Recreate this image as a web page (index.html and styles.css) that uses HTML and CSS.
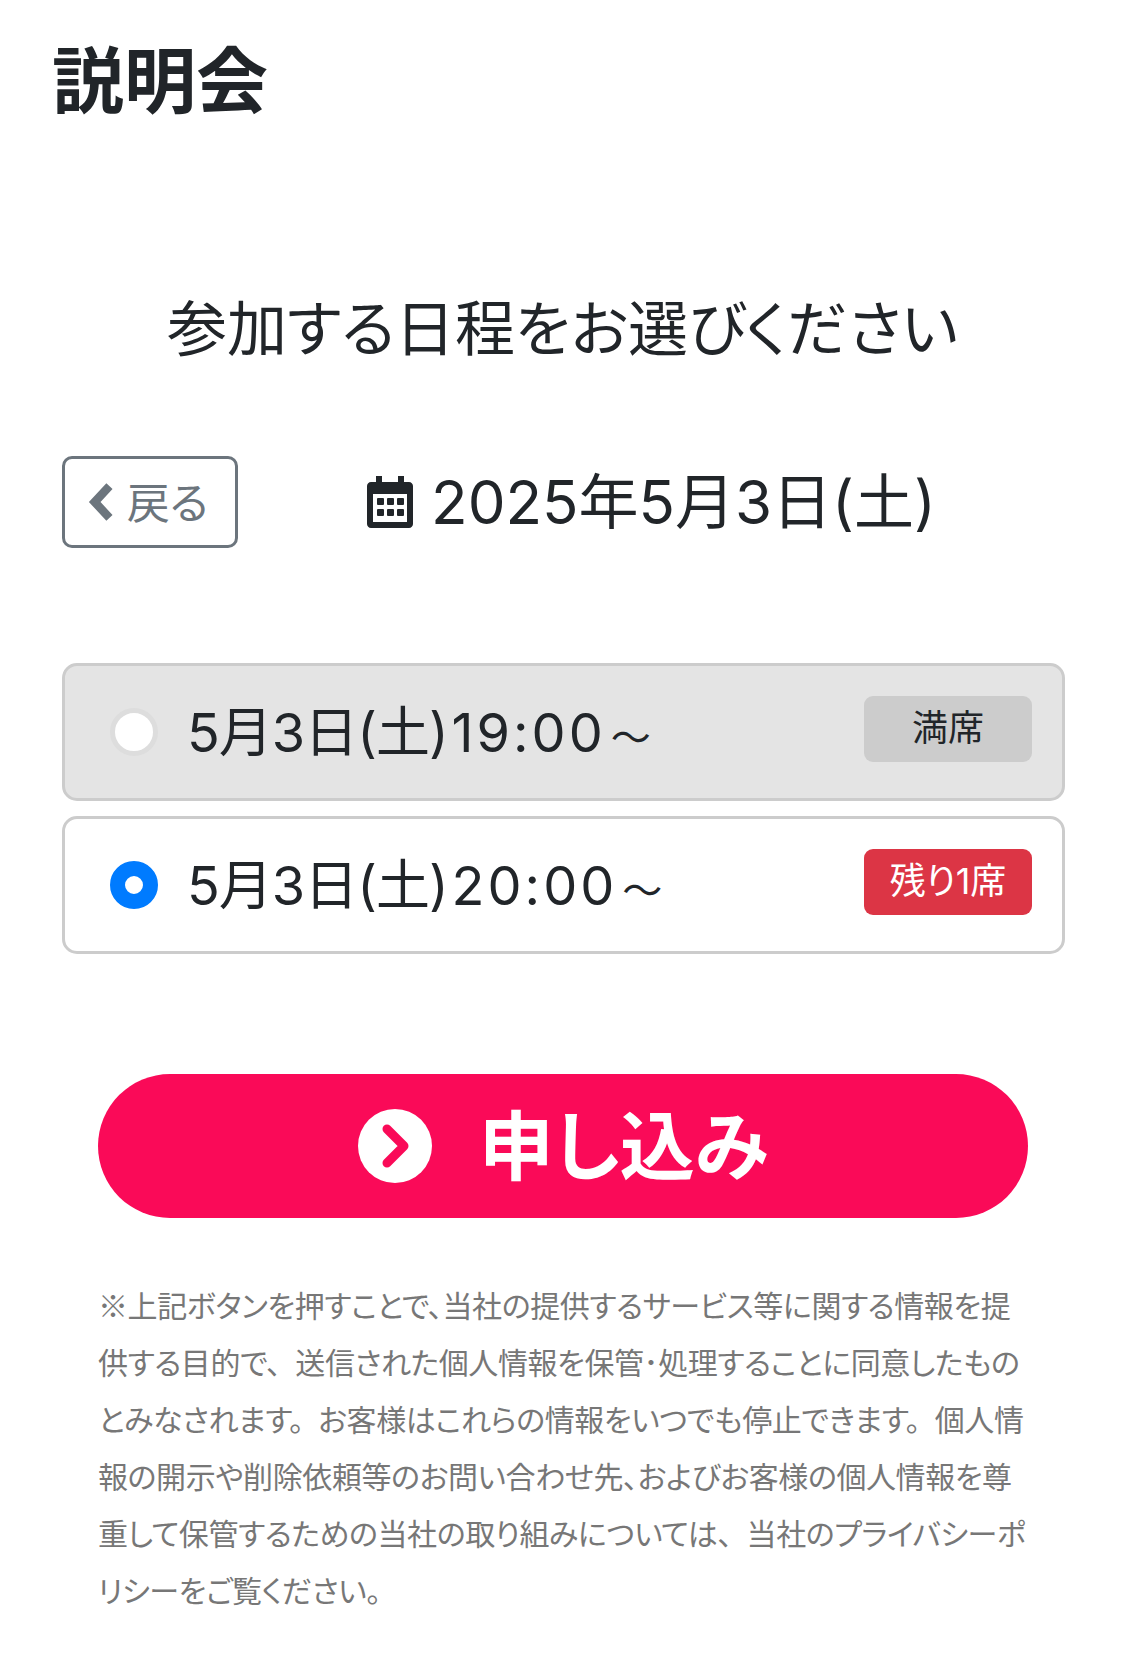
FILE: index.html
```html
<!DOCTYPE html>
<html lang="ja">
<head>
    <meta charset="UTF-8">
    <meta name="viewport" content="width=device-width, initial-scale=1.0">
    <title>説明会</title>
    <link rel="stylesheet" href="styles.css">
</head>
<body>

    <h1 class="page-title">説明会</h1>

    <h2 class="lead">参加する日程をお選びください</h2>

    <div class="date-row">
        <a class="back-btn" href="#">
            <svg class="back-icon" viewBox="0 0 24 36"><polyline points="20,3 6,18 20,33"/></svg>
            <span class="back-text">戻る</span>
        </a>
        <div class="date-label">
            <svg class="cal-icon" viewBox="0 0 46 52">
                <path d="M9 0h6v6h16V0h6v6h5c2.200 0 4 1.800 4 4v38c0 2.200-1.800 4-4 4H4c-2.200 0-4-1.800-4-4V10c0-2.200 1.800-4 4-4h5zM6 18v28h34V18z" fill-rule="evenodd"/>
                <rect x="10" y="22" width="7" height="7" rx="1"/>
                <rect x="20" y="22" width="7" height="7" rx="1"/>
                <rect x="30" y="22" width="7" height="7" rx="1"/>
                <rect x="10" y="33" width="7" height="7" rx="1"/>
                <rect x="20" y="33" width="7" height="7" rx="1"/>
                <rect x="30" y="33" width="7" height="7" rx="1"/>
            </svg>
            <span class="date-text">2025年5月3日(土)</span>
        </div>
    </div>

    <div class="slots">
        <label class="slot slot-full">
            <span class="radio"></span>
            <span class="slot-text"><span class="slot-day">5月3日(土)</span><span class="slot-time">19:00</span><span class="tilde">〜</span></span>
            <span class="badge badge-gray">満席</span>
        </label>
        <label class="slot">
            <span class="radio radio-on"></span>
            <span class="slot-text"><span class="slot-day">5月3日(土)</span><span class="slot-time">20:00</span><span class="tilde">〜</span></span>
            <span class="badge badge-red">残り1席</span>
        </label>
    </div>

    <a class="apply-btn" href="#">
        <svg class="apply-icon" viewBox="0 0 74 74">
            <circle cx="37" cy="37" r="37" fill="#fff"/>
            <polyline points="29,20 46,37 29,54" fill="none" stroke="#fa0a58" stroke-width="9" stroke-linejoin="round" stroke-linecap="round"/>
        </svg>
        <span class="apply-text">申し込み</span>
    </a>

    <p class="note">※上記ボタンを押すことで、当社の提供するサービス等に関する情報を提供する目的で、&ensp;送信された個人情報を保管･処理することに同意したものとみなされます。&ensp;お客様はこれらの情報をいつでも停止できます。&ensp;個人情報の開示や削除依頼等のお問い合わせ先、およびお客様の個人情報を尊重して保管するための当社の取り組みについては、&ensp;当社のプライバシーポリシーをご覧ください。</p>

</body>
</html>
```

FILE: styles.css
```css
body {
    margin: 0;
    background-color: #fff;
    color: #212529;
    font-family: Inter, "Noto Sans CJK JP", sans-serif;
    font-feature-settings: "palt";
}

.page-title {
    margin: 0;
    padding: 38px 0 0 52px;
    font-size: 72px;
    line-height: 86px;
    font-weight: 700;
}

.lead {
    margin: 162px 0 0;
    text-align: center;
    font-size: 60px;
    line-height: 86px;
    font-weight: 400;
}

.date-row {
    display: flex;
    align-items: center;
    margin: 84px 60px 0 62px;
}

.back-btn {
    display: flex;
    align-items: center;
    justify-content: center;
    gap: 13px;
    box-sizing: border-box;
    width: 176px;
    height: 92px;
    border: 3px solid #6c757d;
    border-radius: 10px;
    color: #6c757d;
    font-size: 43px;
    text-decoration: none;
}

.back-text {
    padding-bottom: 4px;
}

.back-icon {
    width: 26px;
    height: 38px;
    margin-left: -4px;
    fill: none;
    stroke: #6c757d;
    stroke-width: 8;
}

.date-label {
    flex: 1;
    display: flex;
    align-items: center;
    justify-content: center;
    gap: 18px;
    font-size: 60px;
    line-height: 86px;
}

.cal-icon {
    width: 46px;
    height: 52px;
    fill: #212529;
}

.slots {
    display: flex;
    flex-direction: column;
    gap: 15px;
    margin: 115px 60px 0 62px;
}

.slot {
    display: flex;
    align-items: center;
    box-sizing: border-box;
    height: 138px;
    padding: 0 30px 0 45px;
    border: 3px solid #ccc;
    border-radius: 15px;
}

.slot-full {
    background-color: #e4e4e4;
}

.radio {
    box-sizing: border-box;
    width: 48px;
    height: 48px;
    border: 5px solid #ddd;
    border-radius: 50%;
    background-color: #fff;
}

.radio-on {
    border: 15px solid #007bff;
}

.slot-text {
    flex: 1;
    margin-left: 29px;
    padding-bottom: 8px;
    font-size: 54px;
}

.slot-day {
    letter-spacing: -1px;
}

.slot-time {
    margin-left: 4px;
    letter-spacing: 3px;
}

.tilde {
    margin-left: 5px;
    font-size: 40px;
}

.badge {
    width: 168px;
    height: 66px;
    margin-bottom: 7px;
    border-radius: 9px;
    font-size: 36px;
    line-height: 64px;
    text-align: center;
}

.badge-gray {
    background-color: #ccc;
}

.badge-red {
    background-color: #dc3545;
    color: #fff;
}

.apply-btn {
    display: flex;
    align-items: center;
    justify-content: center;
    gap: 47px;
    height: 144px;
    margin: 120px 97px 0 98px;
    border-radius: 72px;
    background-color: #fa0a58;
    color: #fff;
    font-size: 75px;
    font-weight: 700;
    text-decoration: none;
}

.apply-text {
    padding-bottom: 10px;
}

.apply-icon {
    width: 74px;
    height: 74px;
}

.note {
    margin: 58px 97px 0 98px;
    color: #777;
    font-family: "Noto Sans CJK JP", sans-serif;
    font-size: 30px;
    line-height: 57px;
    letter-spacing: -0.4px;
}
```
